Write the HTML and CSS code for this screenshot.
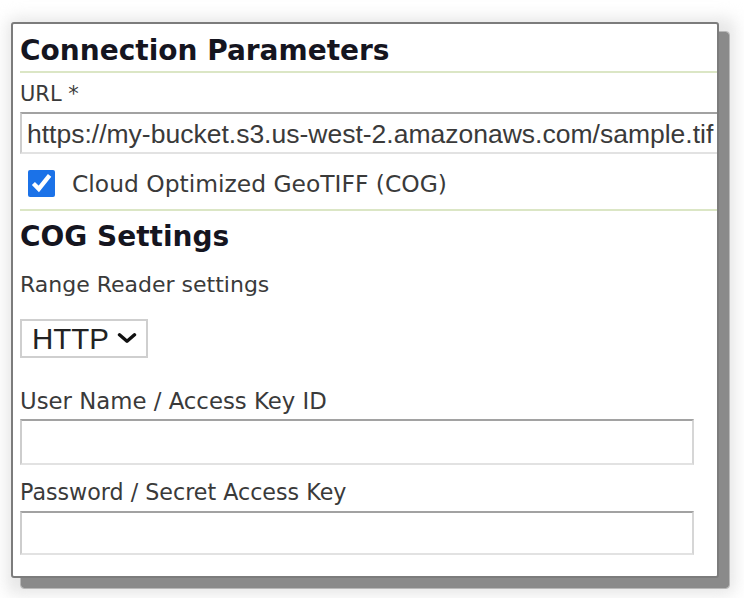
FILE: index.html
```html
<!DOCTYPE html>
<html>
<head>
<meta charset="utf-8">
<link rel="stylesheet" href="styles.css">
</head>
<body>
<div class="frame">
<div class="glow"></div>
<div class="drop"></div>
<div class="panel">
  <h2 class="section-title">Connection Parameters</h2>
  <label class="field-label url-label">URL *</label>
  <input class="text-input url-input" type="text" value="https://my-bucket.s3.us-west-2.amazonaws.com/sample.tif">
  <div class="check-row">
    <input class="check" type="checkbox" checked>
    <span class="check-label">Cloud Optimized GeoTIFF (COG)</span>
  </div>
  <h2 class="section-title cog-title">COG Settings</h2>
  <div class="field-label range-label">Range Reader settings</div>
  <div class="select-wrap">
    <select class="select"><option>HTTP</option></select>
    <svg class="chevron" width="20" height="10" viewBox="0 0 20 10"><path d="M2.5 1.8 L10 8.2 L17.5 1.8" fill="none" stroke="#111" stroke-width="3.4" stroke-linecap="round" stroke-linejoin="round"/></svg>
  </div>
  <label class="field-label user-label">User Name / Access Key ID</label>
  <input class="text-input cred-input" type="text">
  <label class="field-label pass-label">Password / Secret Access Key</label>
  <input class="text-input cred-input pass-input" type="text">
</div>
</div>
</body>
</html>
```

FILE: styles.css
```css
html, body {
  margin: 0;
  padding: 0;
  background: #ffffff;
}

body {
  padding: 22px 0 20px 11px;
  min-height: 556px;
}

.frame {
  position: relative;
  width: 708px;
  height: 556px;
}

.glow {
  position: absolute;
  left: -4px;
  top: -4px;
  width: 728px;
  height: 576px;
  background: #e6e6e6;
  border-radius: 8px;
  filter: blur(8px);
}

.drop {
  position: absolute;
  left: 10px;
  top: 10px;
  width: 708px;
  height: 556px;
  background: #8a8a8a;
  border-radius: 3px;
  outline: 1px solid #b8b8b8;
}

.panel {
  position: relative;
  box-sizing: border-box;
  width: 708px;
  height: 556px;
  border: 2px solid #7c7c7c;
  border-radius: 3px;
  background: #ffffff;
  padding: 11px 0 0 7px;
  overflow: hidden;
  display: flex;
  flex-direction: column;
  align-items: flex-start;
}

.section-title {
  align-self: stretch;
  margin: 0;
  font-family: "DejaVu Sans", sans-serif;
  font-weight: bold;
  font-size: 28px;
  line-height: 32px;
  color: #15151f;
  padding-bottom: 4px;
  border-bottom: 2px solid #dbe6c5;
}

.cog-title {
  border-bottom: none;
  padding-bottom: 0;
  margin-top: 10px;
}

.field-label {
  display: block;
  font-family: "DejaVu Sans", sans-serif;
  font-size: 22.5px;
  line-height: 26px;
  color: #3a3a3a;
}

.url-label {
  margin-top: 8px;
  font-size: 21px;
}

.range-label {
  margin-top: 19px;
  font-size: 22px;
}

.user-label {
  margin-top: 30px;
  font-size: 22.8px;
}

.pass-label {
  margin-top: 14px;
  font-size: 22.2px;
}

.text-input {
  box-sizing: border-box;
  margin: 0;
  border-style: solid;
  border-width: 2px;
  border-color: #a2a2a2 #d6d6d6 #e2e2e2 #cdcdcd;
  background: #fff;
  font-family: "Liberation Sans", Arial, sans-serif;
  outline: none;
}

.url-input {
  width: 740px;
  height: 42px;
  margin-top: 5px;
  padding: 2px 5px 0;
  font-size: 26.5px;
  color: #3a3a3a;
}

.check-row {
  display: flex;
  align-items: center;
  align-self: stretch;
  margin-top: 16px;
  padding-bottom: 12px;
  border-bottom: 2px solid #dbe6c5;
}

.check {
  width: 27px;
  height: 27px;
  margin: 0 0 0 8px;
  accent-color: #1b72e8;
}

.check-label {
  margin-left: 17px;
  font-family: "DejaVu Sans", sans-serif;
  font-size: 23.4px;
  line-height: 26px;
  color: #3a3a3a;
}

.select-wrap {
  position: relative;
  margin-top: 21px;
}

.select {
  box-sizing: border-box;
  appearance: none;
  -webkit-appearance: none;
  width: 128px;
  height: 39px;
  margin: 0;
  padding: 0 0 0 10px;
  border: 2px solid #cfcfcf;
  border-radius: 0;
  background: #fff;
  font-family: "Liberation Sans", Arial, sans-serif;
  font-size: 29.5px;
  color: #222;
  display: block;
}

.chevron {
  position: absolute;
  left: 97px;
  top: 14px;
  pointer-events: none;
}

.cred-input {
  width: 674px;
  height: 46px;
  margin-top: 5px;
}

.pass-input {
  height: 44px;
  margin-top: 6px;
}
```
